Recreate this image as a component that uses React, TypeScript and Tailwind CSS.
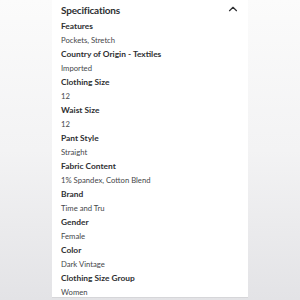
import { ChevronUp } from "lucide-react";

const specs = [
  { label: "Features", value: "Pockets, Stretch" },
  { label: "Country of Origin - Textiles", value: "Imported" },
  { label: "Clothing Size", value: "12" },
  { label: "Waist Size", value: "12" },
  { label: "Pant Style", value: "Straight" },
  { label: "Fabric Content", value: "1% Spandex, Cotton Blend" },
  { label: "Brand", value: "Time and Tru" },
  { label: "Gender", value: "Female" },
  { label: "Color", value: "Dark Vintage" },
  { label: "Clothing Size Group", value: "Women" },
];

const App = () => {
  return (
    <div
      className="w-[300px] h-[300px] flex bg-gradient-to-b from-[#fbfbfb] via-[#f3f3f4] to-[#e3e3e6] overflow-hidden"
      style={{ fontFamily: "Lato, 'Open Sans', sans-serif" }}
    >
      <div className="w-[52px] shrink-0" />
      <div className="w-[196px] h-[298px] bg-white pl-[9px] pr-[8px] border-b border-[#d6d6d9]">
        {/* Header */}
        <div className="h-[20px] flex items-center justify-between">
          <h2 className="text-[10px] font-bold text-[#2e2f32] tracking-[-0.2px]">Specifications</h2>
          <ChevronUp className="w-[14px] h-[14px] -mt-[2px] text-[#2e2f32]" strokeWidth={2} />
        </div>

        {/* Spec rows */}
        {specs.map(({ label, value }) => (
          <div key={label}>
            <div className="h-[13px] flex items-center text-[8.4px] leading-none font-bold text-[#2e2f32]">
              {label}
            </div>
            <div className="h-[15px] pt-[1px] text-[7.7px] leading-[12px] text-[#46474a]">
              {value}
            </div>
          </div>
        ))}
      </div>
      <div className="flex-1" />
    </div>
  );
};

export default App;
